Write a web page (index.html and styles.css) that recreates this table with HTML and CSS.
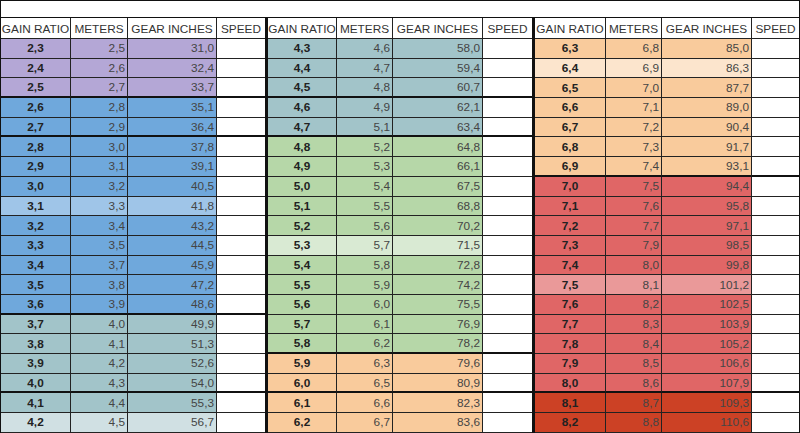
FILE: index.html
```html
<!DOCTYPE html>
<html lang="en">
<head>
<meta charset="utf-8">
<title>Gear ratios</title>
<link rel="stylesheet" href="styles.css">
</head>
<body>
<div class="sheet">
  <div class="title"></div>
  <div class="blocks">
    <div class="block b1">
      <div class="row hdr"><div>GAIN RATIO</div><div>METERS</div><div>GEAR INCHES</div><div>SPEED</div></div>
      <div class="row purple"><div class="g">2,3</div><div class="n">2,5</div><div class="n">31,0</div><div class="s"></div></div>
      <div class="row purple"><div class="g">2,4</div><div class="n">2,6</div><div class="n">32,4</div><div class="s"></div></div>
      <div class="row purple ge"><div class="g">2,5</div><div class="n">2,7</div><div class="n">33,7</div><div class="s"></div></div>
      <div class="row blue"><div class="g">2,6</div><div class="n">2,8</div><div class="n">35,1</div><div class="s"></div></div>
      <div class="row blue ge"><div class="g">2,7</div><div class="n">2,9</div><div class="n">36,4</div><div class="s"></div></div>
      <div class="row blue"><div class="g">2,8</div><div class="n">3,0</div><div class="n">37,8</div><div class="s"></div></div>
      <div class="row blue"><div class="g">2,9</div><div class="n">3,1</div><div class="n">39,1</div><div class="s"></div></div>
      <div class="row blue"><div class="g">3,0</div><div class="n">3,2</div><div class="n">40,5</div><div class="s"></div></div>
      <div class="row blue-l"><div class="g">3,1</div><div class="n">3,3</div><div class="n">41,8</div><div class="s"></div></div>
      <div class="row blue"><div class="g">3,2</div><div class="n">3,4</div><div class="n">43,2</div><div class="s"></div></div>
      <div class="row blue"><div class="g">3,3</div><div class="n">3,5</div><div class="n">44,5</div><div class="s"></div></div>
      <div class="row blue"><div class="g">3,4</div><div class="n">3,7</div><div class="n">45,9</div><div class="s"></div></div>
      <div class="row blue"><div class="g">3,5</div><div class="n">3,8</div><div class="n">47,2</div><div class="s"></div></div>
      <div class="row blue ge"><div class="g">3,6</div><div class="n">3,9</div><div class="n">48,6</div><div class="s"></div></div>
      <div class="row teal"><div class="g">3,7</div><div class="n">4,0</div><div class="n">49,9</div><div class="s"></div></div>
      <div class="row teal"><div class="g">3,8</div><div class="n">4,1</div><div class="n">51,3</div><div class="s"></div></div>
      <div class="row teal"><div class="g">3,9</div><div class="n">4,2</div><div class="n">52,6</div><div class="s"></div></div>
      <div class="row teal ge"><div class="g">4,0</div><div class="n">4,3</div><div class="n">54,0</div><div class="s"></div></div>
      <div class="row teal"><div class="g">4,1</div><div class="n">4,4</div><div class="n">55,3</div><div class="s"></div></div>
      <div class="row teal-l"><div class="g">4,2</div><div class="n">4,5</div><div class="n">56,7</div><div class="s"></div></div>
    </div>
    <div class="sep"></div>
    <div class="block b2">
      <div class="row hdr"><div>GAIN RATIO</div><div>METERS</div><div>GEAR INCHES</div><div>SPEED</div></div>
      <div class="row teal"><div class="g">4,3</div><div class="n">4,6</div><div class="n">58,0</div><div class="s"></div></div>
      <div class="row teal"><div class="g">4,4</div><div class="n">4,7</div><div class="n">59,4</div><div class="s"></div></div>
      <div class="row teal ge"><div class="g">4,5</div><div class="n">4,8</div><div class="n">60,7</div><div class="s"></div></div>
      <div class="row teal"><div class="g">4,6</div><div class="n">4,9</div><div class="n">62,1</div><div class="s"></div></div>
      <div class="row teal ge"><div class="g">4,7</div><div class="n">5,1</div><div class="n">63,4</div><div class="s"></div></div>
      <div class="row green"><div class="g">4,8</div><div class="n">5,2</div><div class="n">64,8</div><div class="s"></div></div>
      <div class="row green"><div class="g">4,9</div><div class="n">5,3</div><div class="n">66,1</div><div class="s"></div></div>
      <div class="row green"><div class="g">5,0</div><div class="n">5,4</div><div class="n">67,5</div><div class="s"></div></div>
      <div class="row green"><div class="g">5,1</div><div class="n">5,5</div><div class="n">68,8</div><div class="s"></div></div>
      <div class="row green"><div class="g">5,2</div><div class="n">5,6</div><div class="n">70,2</div><div class="s"></div></div>
      <div class="row green-l"><div class="g">5,3</div><div class="n">5,7</div><div class="n">71,5</div><div class="s"></div></div>
      <div class="row green"><div class="g">5,4</div><div class="n">5,8</div><div class="n">72,8</div><div class="s"></div></div>
      <div class="row green"><div class="g">5,5</div><div class="n">5,9</div><div class="n">74,2</div><div class="s"></div></div>
      <div class="row green"><div class="g">5,6</div><div class="n">6,0</div><div class="n">75,5</div><div class="s"></div></div>
      <div class="row green"><div class="g">5,7</div><div class="n">6,1</div><div class="n">76,9</div><div class="s"></div></div>
      <div class="row green ge"><div class="g">5,8</div><div class="n">6,2</div><div class="n">78,2</div><div class="s"></div></div>
      <div class="row orange"><div class="g">5,9</div><div class="n">6,3</div><div class="n">79,6</div><div class="s"></div></div>
      <div class="row orange ge"><div class="g">6,0</div><div class="n">6,5</div><div class="n">80,9</div><div class="s"></div></div>
      <div class="row orange"><div class="g">6,1</div><div class="n">6,6</div><div class="n">82,3</div><div class="s"></div></div>
      <div class="row orange"><div class="g">6,2</div><div class="n">6,7</div><div class="n">83,6</div><div class="s"></div></div>
    </div>
    <div class="sep"></div>
    <div class="block b3">
      <div class="row hdr"><div>GAIN RATIO</div><div>METERS</div><div>GEAR INCHES</div><div>SPEED</div></div>
      <div class="row orange"><div class="g">6,3</div><div class="n">6,8</div><div class="n">85,0</div><div class="s"></div></div>
      <div class="row orange-l"><div class="g">6,4</div><div class="n">6,9</div><div class="n">86,3</div><div class="s"></div></div>
      <div class="row orange"><div class="g">6,5</div><div class="n">7,0</div><div class="n">87,7</div><div class="s"></div></div>
      <div class="row orange"><div class="g">6,6</div><div class="n">7,1</div><div class="n">89,0</div><div class="s"></div></div>
      <div class="row orange"><div class="g">6,7</div><div class="n">7,2</div><div class="n">90,4</div><div class="s"></div></div>
      <div class="row orange"><div class="g">6,8</div><div class="n">7,3</div><div class="n">91,7</div><div class="s"></div></div>
      <div class="row orange ge"><div class="g">6,9</div><div class="n">7,4</div><div class="n">93,1</div><div class="s"></div></div>
      <div class="row red"><div class="g">7,0</div><div class="n">7,5</div><div class="n">94,4</div><div class="s"></div></div>
      <div class="row red"><div class="g">7,1</div><div class="n">7,6</div><div class="n">95,8</div><div class="s"></div></div>
      <div class="row red"><div class="g">7,2</div><div class="n">7,7</div><div class="n">97,1</div><div class="s"></div></div>
      <div class="row red"><div class="g">7,3</div><div class="n">7,9</div><div class="n">98,5</div><div class="s"></div></div>
      <div class="row red"><div class="g">7,4</div><div class="n">8,0</div><div class="n">99,8</div><div class="s"></div></div>
      <div class="row red-l"><div class="g">7,5</div><div class="n">8,1</div><div class="n">101,2</div><div class="s"></div></div>
      <div class="row red"><div class="g">7,6</div><div class="n">8,2</div><div class="n">102,5</div><div class="s"></div></div>
      <div class="row red"><div class="g">7,7</div><div class="n">8,3</div><div class="n">103,9</div><div class="s"></div></div>
      <div class="row red"><div class="g">7,8</div><div class="n">8,4</div><div class="n">105,2</div><div class="s"></div></div>
      <div class="row red"><div class="g">7,9</div><div class="n">8,5</div><div class="n">106,6</div><div class="s"></div></div>
      <div class="row red ge"><div class="g">8,0</div><div class="n">8,6</div><div class="n">107,9</div><div class="s"></div></div>
      <div class="row berry"><div class="g">8,1</div><div class="n">8,7</div><div class="n">109,3</div><div class="s"></div></div>
      <div class="row berry"><div class="g">8,2</div><div class="n">8,8</div><div class="n">110,6</div><div class="s"></div></div>
    </div>
  </div>
</div>
</body>
</html>
```

FILE: styles.css
```css
* { box-sizing: border-box; }

html, body {
  margin: 0;
  padding: 0;
  background: #ffffff;
}

body {
  font-family: "Liberation Sans", Arial, sans-serif;
  color: #222222;
}

.sheet {
  width: 800px;
  height: 433px;
  overflow: hidden;
  border-top: 1px solid #111111;
  border-left: 1px solid #111111;
  border-right: 1px solid #111111;
}

.title {
  height: 17px;
  border-bottom: 1px solid #111111;
  background: #ffffff;
}

.blocks {
  display: flex;
}

.block {
  display: flex;
  flex-direction: column;
}

.sep {
  width: 3px;
  background: #111111;
}

.row {
  display: grid;
  height: 19.7px;
}

.b1 .row { grid-template-columns: 70px 57px 89px 48px; }
.b2 .row { grid-template-columns: 69px 56px 90px 49px; }
.b3 .row { grid-template-columns: 71px 56px 90px 47px; }

.row > div {
  display: flex;
  align-items: center;
  border-right: 1px solid #222222;
  border-bottom: 1px solid #222222;
  overflow: hidden;
  white-space: nowrap;
}

.row > div:last-child {
  border-right: none;
}

.row.ge > div {
  border-bottom: 2px solid #111111;
}

.hdr {
  height: 21px;
}

.hdr > div {
  justify-content: center;
  font-size: 11.8px;
  color: #333333;
  background: #ffffff;
  padding-top: 1px;
}

.g {
  justify-content: center;
  font-weight: bold;
  font-size: 11.8px;
  color: #222222;
}

.n {
  justify-content: flex-end;
  padding-right: 2px;
  font-size: 11.8px;
  color: #454545;
}

.s {
  background: #ffffff;
}

.purple .g, .purple .n { background: #b4a7d6; }
.blue .g, .blue .n { background: #6fa8dc; }
.blue-l .g, .blue-l .n { background: #9fc5e8; }
.teal .g, .teal .n { background: #a2c4c9; }
.teal-l .g, .teal-l .n { background: #d0e0e3; }
.green .g, .green .n { background: #b6d7a8; }
.green-l .g, .green-l .n { background: #d9ead3; }
.orange .g, .orange .n { background: #f9cb9c; }
.orange-l .g, .orange-l .n { background: #fce5cd; }
.red .g, .red .n { background: #e06666; }
.red-l .g, .red-l .n { background: #ea9999; }
.berry .g, .berry .n { background: #cc4125; }
```
